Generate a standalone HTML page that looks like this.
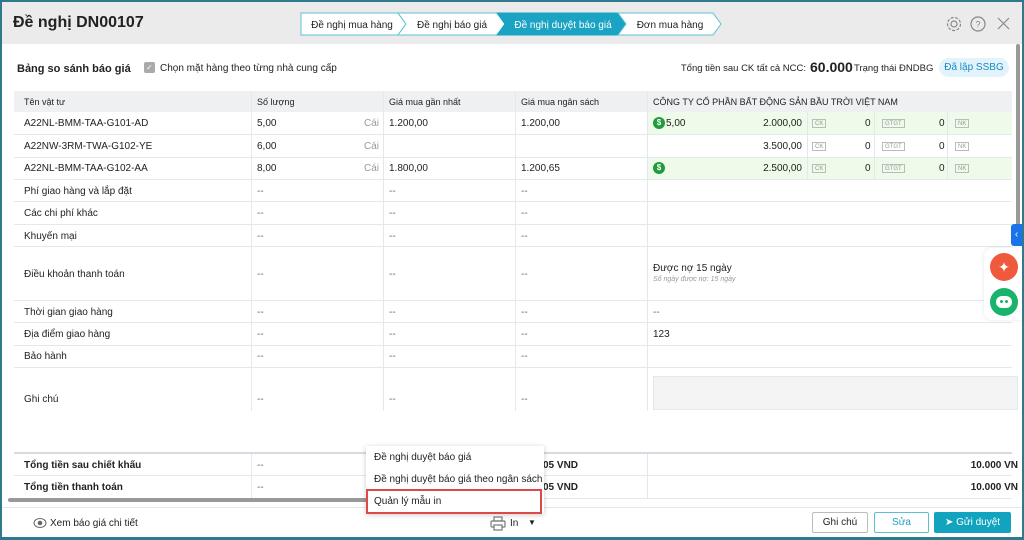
<!DOCTYPE html>
<html><head><meta charset="utf-8"><style>
*{box-sizing:border-box;margin:0;padding:0}
body{width:1024px;height:540px;overflow:hidden;font-family:"Liberation Sans",sans-serif;font-size:10px;color:#222;background:#2e7a8c;position:relative}
.a{position:absolute}
#frame{position:absolute;left:2px;top:2px;width:1020px;height:535px;background:#fff;overflow:hidden}
.hd{left:0;top:0;width:1020px;height:42px;background:#ebebeb}
.t{white-space:nowrap}
.hl{background:#e3e8ec;height:1px}
.vl{background:#e3e8ec;width:1px}
.bd{font-weight:bold}
.tag{border:1px solid #bbb;color:#999;font-size:6px;padding:0 2px;height:9px;line-height:8px}
.dl{color:#666}
</style></head><body><div id="frame">
<div class="a hd"></div>
<div class="a t bd" style="left:11px;top:12px;font-size:16px">Đề nghị DN00107</div>
<svg class="a" style="left:298px;top:10px" width="422" height="24">
<path d="M1 1H98L106 12L98 23H1Z" fill="#fff" stroke="#5bc0d4"/>
<path d="M98 1H197L205 12L197 23H98L106 12Z" fill="#fff" stroke="#5bc0d4"/>
<path d="M197 1H318L326 12L318 23H197L205 12Z" fill="#1aa3c3" stroke="#1aa3c3"/>
<path d="M318 1H413L421 12L413 23H318L326 12Z" fill="#fff" stroke="#5bc0d4"/>
<text x="52" y="16" font-size="10" text-anchor="middle" fill="#222" font-family="Liberation Sans">Đề nghị mua hàng</text>
<text x="152" y="16" font-size="10" text-anchor="middle" fill="#222" font-family="Liberation Sans">Đề nghị báo giá</text>
<text x="263" y="16" font-size="10" text-anchor="middle" fill="#fff" font-family="Liberation Sans">Đề nghị duyệt báo giá</text>
<text x="370" y="16" font-size="10" text-anchor="middle" fill="#222" font-family="Liberation Sans">Đơn mua hàng</text>
</svg>
<svg class="a" style="left:944px;top:13px" width="70" height="18" fill="none" stroke="#888" stroke-width="1.2">
<circle cx="8" cy="9" r="3"/><circle cx="8" cy="9" r="6.5" stroke-dasharray="3 1.5"/>
<circle cx="32" cy="9" r="7"/><text x="32" y="12.5" font-size="9" text-anchor="middle" fill="#888" stroke="none">?</text>
<path d="M52 3L63 14M63 3L52 14"/></svg>

<div class="a t bd" style="left:15px;top:61px;font-size:11px">Bảng so sánh báo giá</div>
<div class="a" style="left:142px;top:60px;width:11px;height:11px;background:#aaa;border-radius:2px;color:#fff;font-size:8px;line-height:11px;text-align:center">✓</div>
<div class="a t" style="left:158px;top:61px">Chọn mặt hàng theo từng nhà cung cấp</div>
<div class="a t" style="left:604px;top:61px;width:200px;text-align:right;font-size:9.5px">Tổng tiền sau CK tất cả NCC:</div>
<div class="a t bd" style="left:808px;top:57px;font-size:14px">60.000</div>
<div class="a t" style="left:852px;top:61px;font-size:9.5px">Trạng thái ĐNDBG</div>
<div class="a t" style="left:937px;top:56px;width:70px;height:19px;border-radius:10px;background:#e3f3fb;color:#1a8bc2;line-height:19px;text-align:center">Đã lập SSBG</div>

<div class="a" style="left:12px;top:89px;width:998px;height:21px;background:#eff0f1"></div>
<div class="a t" style="left:22px;top:95px;font-size:9px">Tên vật tư</div>
<div class="a t" style="left:255px;top:95px;font-size:9px">Số lượng</div>
<div class="a t" style="left:387px;top:95px;font-size:9px">Giá mua gần nhất</div>
<div class="a t" style="left:519px;top:95px;font-size:9px">Giá mua ngân sách</div>
<div class="a t" style="left:651px;top:95px;font-size:9px">CÔNG TY CỔ PHẦN BẤT ĐỘNG SẢN BẦU TRỜI VIỆT NAM</div>
<div class="a" style="left:645px;top:110px;width:365px;height:22px;background:#eefbea"></div>
<div class="a" style="left:645px;top:155px;width:365px;height:22px;background:#eefbea"></div>
<div class="a hl" style="left:12px;top:132px;width:998px"></div>
<div class="a hl" style="left:12px;top:155px;width:998px"></div>
<div class="a hl" style="left:12px;top:177px;width:998px"></div>
<div class="a hl" style="left:12px;top:199px;width:998px"></div>
<div class="a hl" style="left:12px;top:222px;width:998px"></div>
<div class="a hl" style="left:12px;top:244px;width:998px"></div>
<div class="a hl" style="left:12px;top:298px;width:998px"></div>
<div class="a hl" style="left:12px;top:320px;width:998px"></div>
<div class="a hl" style="left:12px;top:343px;width:998px"></div>
<div class="a hl" style="left:12px;top:365px;width:998px"></div>
<div class="a vl" style="left:249px;top:89px;height:320px"></div>
<div class="a vl" style="left:381px;top:89px;height:320px"></div>
<div class="a vl" style="left:513px;top:89px;height:320px"></div>
<div class="a vl" style="left:645px;top:89px;height:320px"></div>
<div class="a vl" style="left:805px;top:110px;height:67px"></div>
<div class="a vl" style="left:872px;top:110px;height:67px"></div>
<div class="a vl" style="left:945px;top:110px;height:67px"></div>

<div class="a t" style="left:22px;top:116px">A22NL-BMM-TAA-G101-AD</div>
<div class="a t" style="left:255px;top:116px">5,00</div><div class="a t" style="left:362px;top:116px;color:#999">Cái</div>
<div class="a t" style="left:387px;top:116px">1.200,00</div><div class="a t" style="left:519px;top:116px">1.200,00</div>
<div class="a" style="left:651px;top:115px;width:12px;height:12px;border-radius:6px;background:#1f9d3c;color:#fff;font-size:8px;text-align:center;line-height:12px;font-weight:bold">$</div>
<div class="a t" style="left:664px;top:116px">5,00</div>
<div class="a t" style="left:740px;top:116px;width:60px;text-align:right">2.000,00</div>

<div class="a t" style="left:22px;top:139px">A22NW-3RM-TWA-G102-YE</div>
<div class="a t" style="left:255px;top:139px">6,00</div><div class="a t" style="left:362px;top:139px;color:#999">Cái</div>
<div class="a t" style="left:740px;top:139px;width:60px;text-align:right">3.500,00</div>

<div class="a t" style="left:22px;top:161px">A22NL-BMM-TAA-G102-AA</div>
<div class="a t" style="left:255px;top:161px">8,00</div><div class="a t" style="left:362px;top:161px;color:#999">Cái</div>
<div class="a t" style="left:387px;top:161px">1.800,00</div><div class="a t" style="left:519px;top:161px">1.200,65</div>
<div class="a" style="left:651px;top:160px;width:12px;height:12px;border-radius:6px;background:#1f9d3c;color:#fff;font-size:8px;text-align:center;line-height:12px;font-weight:bold">$</div>
<div class="a t" style="left:740px;top:161px;width:60px;text-align:right">2.500,00</div>

<div class="a tag" style="left:810px;top:117px">CK</div><div class="a t" style="left:863px;top:116px">0</div>
<div class="a tag" style="left:880px;top:117px">GTGT</div><div class="a t" style="left:937px;top:116px">0</div>
<div class="a tag" style="left:953px;top:117px">NK</div>
<div class="a tag" style="left:810px;top:140px">CK</div><div class="a t" style="left:863px;top:139px">0</div>
<div class="a tag" style="left:880px;top:140px">GTGT</div><div class="a t" style="left:937px;top:139px">0</div>
<div class="a tag" style="left:953px;top:140px">NK</div>
<div class="a tag" style="left:810px;top:162px">CK</div><div class="a t" style="left:863px;top:161px">0</div>
<div class="a tag" style="left:880px;top:162px">GTGT</div><div class="a t" style="left:937px;top:161px">0</div>
<div class="a tag" style="left:953px;top:162px">NK</div>

<div class="a t" style="left:22px;top:184px">Phí giao hàng và lắp đặt</div>
<div class="a t" style="left:22px;top:206px">Các chi phí khác</div>
<div class="a t" style="left:22px;top:229px">Khuyến mại</div>
<div class="a t" style="left:22px;top:267px">Điều khoản thanh toán</div>
<div class="a t" style="left:22px;top:305px">Thời gian giao hàng</div>
<div class="a t" style="left:22px;top:327px">Địa điểm giao hàng</div>
<div class="a t" style="left:22px;top:349px">Bảo hành</div>
<div class="a t" style="left:22px;top:392px">Ghi chú</div>

<div class="a dl" style="left:255px;top:184px">--</div><div class="a dl" style="left:387px;top:184px">--</div><div class="a dl" style="left:519px;top:184px">--</div>
<div class="a dl" style="left:255px;top:206px">--</div><div class="a dl" style="left:387px;top:206px">--</div><div class="a dl" style="left:519px;top:206px">--</div>
<div class="a dl" style="left:255px;top:229px">--</div><div class="a dl" style="left:387px;top:229px">--</div><div class="a dl" style="left:519px;top:229px">--</div>
<div class="a dl" style="left:255px;top:267px">--</div><div class="a dl" style="left:387px;top:267px">--</div><div class="a dl" style="left:519px;top:267px">--</div>
<div class="a dl" style="left:255px;top:305px">--</div><div class="a dl" style="left:387px;top:305px">--</div><div class="a dl" style="left:519px;top:305px">--</div>
<div class="a dl" style="left:255px;top:327px">--</div><div class="a dl" style="left:387px;top:327px">--</div><div class="a dl" style="left:519px;top:327px">--</div>
<div class="a dl" style="left:255px;top:349px">--</div><div class="a dl" style="left:387px;top:349px">--</div><div class="a dl" style="left:519px;top:349px">--</div>
<div class="a dl" style="left:255px;top:392px">--</div><div class="a dl" style="left:387px;top:392px">--</div><div class="a dl" style="left:519px;top:392px">--</div>

<div class="a t" style="left:651px;top:261px">Được nợ 15 ngày</div>
<div class="a t" style="left:651px;top:274px;font-size:7px;font-style:italic;color:#999">Số ngày được nợ: 15 ngày</div>
<div class="a dl" style="left:651px;top:305px">--</div>
<div class="a t" style="left:651px;top:327px">123</div>
<div class="a" style="left:651px;top:374px;width:365px;height:34px;background:#f4f4f4;border:1px solid #e3e8ec"></div>

<div class="a" style="left:12px;top:450px;width:998px;height:2px;background:#d5dbe0"></div>
<div class="a hl" style="left:12px;top:473px;width:998px"></div>
<div class="a hl" style="left:12px;top:496px;width:998px"></div>
<div class="a vl" style="left:249px;top:452px;height:44px"></div>
<div class="a vl" style="left:645px;top:452px;height:44px"></div>
<div class="a t bd" style="left:22px;top:458px">Tổng tiền sau chiết khấu</div>
<div class="a t bd" style="left:22px;top:480px">Tổng tiền thanh toán</div>
<div class="a dl" style="left:255px;top:458px">--</div><div class="a dl" style="left:255px;top:480px">--</div>
<div class="a t bd" style="left:541px;top:458px">05 VND</div><div class="a t bd" style="left:541px;top:480px">05 VND</div>
<div class="a t bd" style="left:920px;top:458px;width:96px;text-align:right">10.000 VN</div>
<div class="a t bd" style="left:920px;top:480px;width:96px;text-align:right">10.000 VN</div>
<div class="a" style="left:6px;top:496px;width:366px;height:4px;background:#999;border-radius:2px"></div>
<div class="a" style="left:1014px;top:42px;width:4px;height:185px;background:#999;border-radius:2px"></div>
<div class="a hl" style="left:0;top:505px;width:1020px"></div>

<div class="a" style="left:1009px;top:222px;width:11px;height:22px;background:#1a73e8;border-radius:3px 0 0 3px;color:#fff;font-size:10px;line-height:22px;text-align:center">‹</div>
<div class="a" style="left:982px;top:246px;width:38px;height:72px;background:#fff;border-radius:8px 0 0 8px;box-shadow:0 0 4px rgba(0,0,0,.1)"></div>
<div class="a" style="left:988px;top:251px;width:28px;height:28px;border-radius:14px;background:#ef5a3c;color:#fff;font-size:14px;text-align:center;line-height:28px">✦</div>
<div class="a" style="left:988px;top:286px;width:28px;height:28px;border-radius:14px;background:#19b36b"></div>
<div class="a" style="left:994px;top:294px;width:16px;height:12px;border-radius:6px;background:#fff"></div>
<div class="a" style="left:998px;top:298px;width:3px;height:3px;border-radius:2px;background:#19b36b"></div>
<div class="a" style="left:1003px;top:298px;width:3px;height:3px;border-radius:2px;background:#19b36b"></div>

<div class="a" style="left:364px;top:444px;width:178px;height:68px;background:#fff;box-shadow:0 1px 5px rgba(0,0,0,.2)"></div>
<div class="a t" style="left:372px;top:450px">Đề nghị duyệt báo giá</div>
<div class="a t" style="left:372px;top:472px">Đề nghị duyệt báo giá theo ngân sách</div>
<div class="a" style="left:364px;top:487px;width:176px;height:25px;border:2px solid #e04848"></div>
<div class="a t" style="left:372px;top:494px">Quản lý mẫu in</div>

<svg class="a" style="left:31px;top:515px" width="14" height="12" fill="none" stroke="#666"><ellipse cx="7" cy="6" rx="6" ry="4.5"/><circle cx="7" cy="6" r="1.8" fill="#666"/></svg>
<div class="a t" style="left:48px;top:516px">Xem báo giá chi tiết</div>
<svg class="a" style="left:488px;top:514px" width="16" height="15" fill="none" stroke="#777" stroke-width="1.2"><rect x="4" y="1" width="8" height="4"/><rect x="1" y="5" width="14" height="6" rx="1"/><rect x="4" y="9" width="8" height="5" fill="#fff"/></svg>
<div class="a t" style="left:508px;top:516px">In</div>
<div class="a t" style="left:526px;top:516px;font-size:8px">▼</div>
<div class="a t" style="left:810px;top:510px;width:56px;height:21px;border:1px solid #bbb;border-radius:2px;line-height:19px;text-align:center">Ghi chú</div>
<div class="a t" style="left:872px;top:510px;width:55px;height:21px;border:1px solid #5bc0d4;border-radius:2px;line-height:19px;text-align:center;color:#1aa3c3">Sửa</div>
<div class="a t" style="left:932px;top:510px;width:77px;height:21px;background:#12a4bf;border-radius:2px;line-height:21px;text-align:center;color:#fff">➤ Gửi duyệt</div>
</div></body></html>
